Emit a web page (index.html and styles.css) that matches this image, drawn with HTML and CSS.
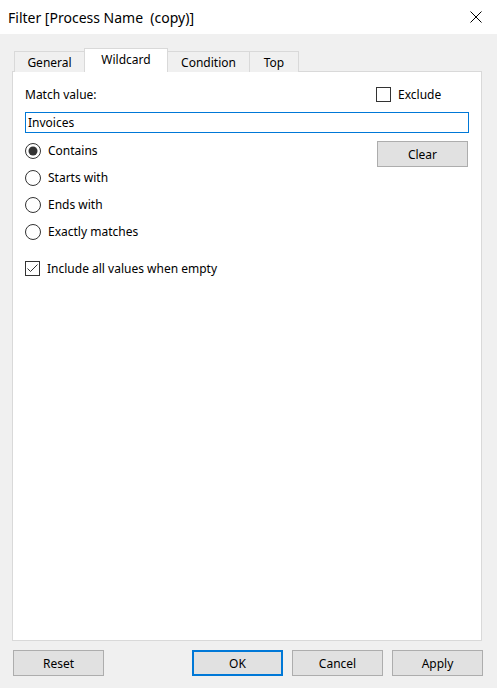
FILE: index.html
```html
<!DOCTYPE html>
<html lang="en">
<head>
<meta charset="utf-8">
<title>Filter</title>
<link rel="stylesheet" href="styles.css">
</head>
<body>
<div class="window">
  <header class="titlebar">
    <span class="title">Filter [Process Name&nbsp; (copy)]</span>
    <svg class="close" width="12" height="12" viewBox="0 0 12 12" aria-label="Close">
      <path d="M0.5 0.5L11.5 11.5M11.5 0.5L0.5 11.5" stroke="#000" stroke-width="1" fill="none"/>
    </svg>
  </header>

  <main class="content">
    <nav class="tabs">
      <div class="tab tab-general">General</div>
      <div class="tab tab-wildcard active">Wildcard</div>
      <div class="tab tab-condition">Condition</div>
      <div class="tab tab-top">Top</div>
    </nav>

    <section class="panel">
      <div class="match-row">
        <span class="label">Match value:</span>
        <label class="check exclude">
          <span class="box"></span>
          <span>Exclude</span>
        </label>
      </div>

      <div class="textbox">Invoices</div>

      <div class="options">
        <div class="radios">
          <div class="radio">
            <svg class="dot" width="16" height="16" viewBox="0 0 16 16">
              <circle cx="8" cy="8" r="7.5" fill="#fff" stroke="#333"/>
              <circle cx="8" cy="8" r="4.5" fill="#333"/>
            </svg>
            <span>Contains</span>
          </div>
          <div class="radio">
            <svg class="dot" width="16" height="16" viewBox="0 0 16 16">
              <circle cx="8" cy="8" r="7.5" fill="#fff" stroke="#333"/>
            </svg>
            <span>Starts with</span>
          </div>
          <div class="radio">
            <svg class="dot" width="16" height="16" viewBox="0 0 16 16">
              <circle cx="8" cy="8" r="7.5" fill="#fff" stroke="#333"/>
            </svg>
            <span>Ends with</span>
          </div>
          <div class="radio">
            <svg class="dot" width="16" height="16" viewBox="0 0 16 16">
              <circle cx="8" cy="8" r="7.5" fill="#fff" stroke="#333"/>
            </svg>
            <span>Exactly matches</span>
          </div>
        </div>
        <button class="btn clear">Clear</button>
      </div>

      <label class="check include">
        <span class="box">
          <svg width="13" height="13" viewBox="0 0 13 13">
            <path d="M1.5 6.5L4.5 9.5L11.5 2.5" stroke="#333" stroke-width="1" fill="none"/>
          </svg>
        </span>
        <span>Include all values when empty</span>
      </label>
    </section>

    <footer class="actions">
      <button class="btn">Reset</button>
      <div class="actions-right">
        <button class="btn default">OK</button>
        <button class="btn">Cancel</button>
        <button class="btn">Apply</button>
      </div>
    </footer>
  </main>
</div>
</body>
</html>
```

FILE: styles.css
```css
* {
  box-sizing: border-box;
}

html, body {
  margin: 0;
  padding: 0;
}

body {
  background: #f0f0f0;
  font-family: "Noto Sans", "Open Sans", sans-serif;
  font-size: 12px;
  color: #000;
}

.window {
  width: 497px;
  height: 688px;
  background: #f0f0f0;
  overflow: hidden;
}

/* Title bar */
.titlebar {
  height: 34px;
  background: #fff;
  display: flex;
  align-items: center;
  justify-content: space-between;
  padding: 0 15px 0 8px;
}

.title {
  font-size: 14px;
  color: #000;
}

.close {
  display: block;
}

/* Dialog body */
.content {
  padding: 14px 15px 0 12px;
}

.tabs {
  display: flex;
  align-items: flex-end;
  height: 24px;
  margin-left: 2px;
  position: relative;
  z-index: 1;
}

.tab {
  height: 21px;
  border: 1px solid #d9d9d9;
  border-bottom: none;
  background: #f0f0f0;
  margin-right: -1px;
  display: flex;
  align-items: center;
  justify-content: center;
  padding-top: 1px;
}

.tab-general { width: 71px; }
.tab-wildcard { width: 84px; }
.tab-condition { width: 83px; }
.tab-top { width: 50px; }

.tab.active {
  height: 24px;
  background: #fff;
  position: relative;
  z-index: 2;
  padding-top: 0;
  padding-bottom: 2px;
}

.panel {
  position: relative;
  margin-top: -1px;
  height: 570px;
  background: #fff;
  border: 1px solid #d9d9d9;
  padding: 14px 12px 0 12px;
}

.tabs + .panel {
  z-index: 0;
}

.match-row {
  display: flex;
  align-items: center;
  justify-content: space-between;
  height: 16px;
}

.check {
  display: flex;
  align-items: center;
  gap: 7px;
}

.exclude {
  width: 93px;
}

.box {
  width: 15px;
  height: 15px;
  border: 1px solid #333;
  background: #fff;
  display: flex;
  align-items: center;
  justify-content: center;
  flex: none;
}

.box svg {
  display: block;
}

.textbox {
  margin-top: 10px;
  height: 21px;
  border: 1px solid #0078d7;
  padding: 0 2px;
  display: flex;
  align-items: center;
}

.options {
  margin-top: 4px;
  display: flex;
  justify-content: space-between;
  align-items: flex-start;
}

.radio {
  height: 27px;
  display: flex;
  align-items: center;
  gap: 7px;
}

.dot {
  display: block;
  flex: none;
}

.btn {
  font: inherit;
  color: #000;
  width: 91px;
  height: 26px;
  background: #e1e1e1;
  border: 1px solid #adadad;
  padding: 0;
  margin: 0;
}

.clear {
  margin-top: 4px;
  margin-right: 1px;
}

.include {
  margin-top: 16px;
  height: 15px;
}

/* Button row */
.actions {
  margin: 9px -1px 0 1px;
  display: flex;
  justify-content: space-between;
}

.actions-right {
  display: flex;
  gap: 9px;
}

.btn.default {
  border: 2px solid #0078d7;
}
```
